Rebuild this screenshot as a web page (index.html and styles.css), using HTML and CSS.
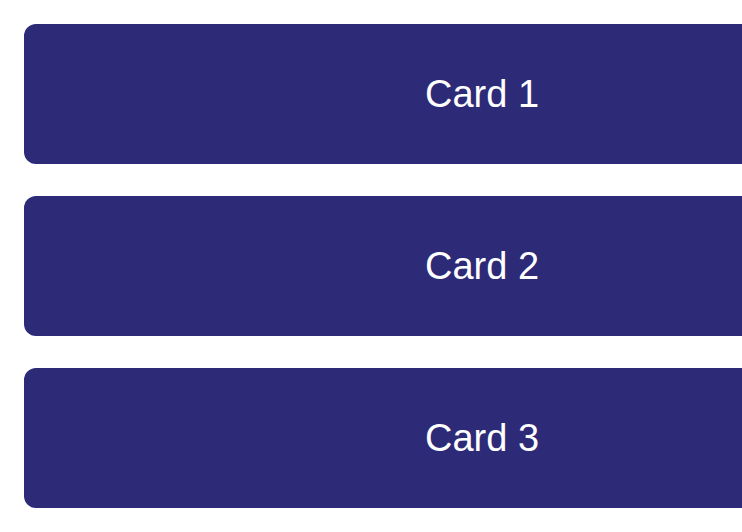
FILE: index.html
```html
<!DOCTYPE html>
<html>
<head>
<meta charset="utf-8">
<link rel="stylesheet" href="styles.css">
</head>
<body>
<div class="list">
  <div class="card">Card 1</div>
  <div class="card">Card 2</div>
  <div class="card">Card 3</div>
</div>
</body>
</html>
```
FILE: styles.css
```css
html, body { margin: 0; padding: 0; background: #fff; overflow: hidden; }
body { padding: 24px; font-family: "Liberation Sans", Arial, sans-serif; }
.list { display: flex; flex-direction: column; gap: 32px; width: 916px; }
.card {
  height: 140px;
  background: #2d2a77;
  border-radius: 12px;
  color: #fff;
  font-size: 38px;
  display: flex;
  align-items: center;
  justify-content: center;
}
```
